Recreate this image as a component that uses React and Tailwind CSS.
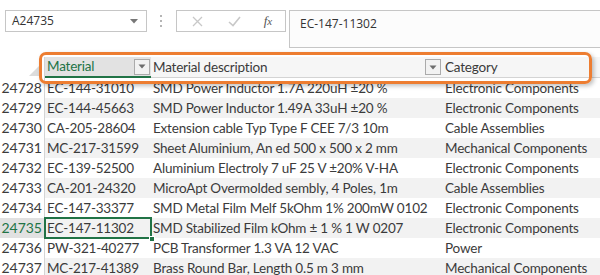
import React from 'react';

const rows = [
  ['24728', 'EC-144-31010', 'SMD Power Inductor 1.7A 220uH ±20 %', 'Electronic Components'],
  ['24729', 'EC-144-45663', 'SMD Power Inductor 1.49A 33uH ±20 %', 'Electronic Components'],
  ['24730', 'CA-205-28604', 'Extension cable Typ Type F CEE 7/3 10m', 'Cable Assemblies'],
  ['24731', 'MC-217-31599', 'Sheet Aluminium, An ed 500 x 500 x 2 mm', 'Mechanical Components'],
  ['24732', 'EC-139-52500', 'Aluminium Electroly 7 uF 25 V ±20% V-HA', 'Electronic Components'],
  ['24733', 'CA-201-24320', 'MicroApt Overmolded sembly, 4 Poles, 1m', 'Cable Assemblies'],
  ['24734', 'EC-147-33377', 'SMD Metal Film Melf 5kOhm 1% 200mW 0102', 'Electronic Components'],
  ['24735', 'EC-147-11302', 'SMD Stabilized Film kOhm ± 1 % 1 W 0207', 'Electronic Components'],
  ['24736', 'PW-321-40277', 'PCB Transformer 1.3 VA 12 VAC', 'Power'],
  ['24737', 'MC-217-41389', 'Brass Round Bar, Length 0.5 m 3 mm', 'Mechanical Components'],
];

const FilterButton = () => (
  <div className="w-[16px] h-[16px] border border-[#ababab] bg-[#f2f2f2] flex items-center justify-center shrink-0">
    <svg width="8" height="5" viewBox="0 0 8 5">
      <path d="M0.5 0.5 L7.5 0.5 L4 4.5 Z" fill="#6d6d6d" />
    </svg>
  </div>
);

const App = () => {
  return (
    <div className="relative w-[600px] h-[275px] overflow-hidden bg-white text-[#3b3b3b]" style={{ fontFamily: 'Lato, "Open Sans", sans-serif' }}>
      {/* formula bar */}
      <div className="h-[57px] flex items-start pt-[10px]" style={{ fontFamily: '"Open Sans", sans-serif' }}>
        <div className="ml-[5px] w-[142px] h-[22px] border border-[#c6c6c6] flex items-center justify-between pl-[6px] pr-[8px] text-[12px] text-[#333]">
          <span>A24735</span>
          <svg width="8" height="5" viewBox="0 0 8 5">
            <path d="M0 0 L8 0 L4 4.5 Z" fill="#777" />
          </svg>
        </div>
        <div className="ml-[12px] w-[4px] h-[22px] flex flex-col items-center justify-center gap-[3px]">
          <div className="w-[2px] h-[2px] bg-[#b5b5b5]" />
          <div className="w-[2px] h-[2px] bg-[#b5b5b5]" />
          <div className="w-[2px] h-[2px] bg-[#b5b5b5]" />
        </div>
        <div className="ml-[13px] w-[110px] h-[22px] border border-[#c6c6c6] flex items-center">
          <div className="w-[40px] flex justify-center">
            <svg width="11" height="11" viewBox="0 0 11 11">
              <path d="M1 1 L10 10 M10 1 L1 10" stroke="#c8c8c8" strokeWidth="1.3" />
            </svg>
          </div>
          <div className="w-[34px] flex justify-center">
            <svg width="13" height="11" viewBox="0 0 13 11">
              <path d="M1 6 L5 9.5 L12 1" stroke="#c8c8c8" strokeWidth="1.6" fill="none" />
            </svg>
          </div>
          <div className="w-[34px] flex justify-center text-[13px] italic text-[#555]" style={{ fontFamily: '"Liberation Serif", serif' }}>
            <span>f</span><span className="text-[11px] mt-[2px]">x</span>
          </div>
        </div>
        <div className="ml-[3px] flex-1 h-[38px] border border-r-0 border-[#c6c6c6] bg-[#fcfcfc] pl-[10px] pt-[4px] text-[12px] text-[#333]">
          EC-147-11302
        </div>
      </div>

      {/* header row */}
      <div className="flex h-[21px] text-[13.5px] tracking-[-0.2px]">
        <div className="w-[45px] shrink-0 border-r border-[#d4d4d4] flex items-end justify-end pr-[3px] pb-[2px]">
          <svg width="12" height="12" viewBox="0 0 12 12">
            <path d="M12 0 L12 12 L0 12 Z" fill="#dcdcdc" />
          </svg>
        </div>
        <div className="w-[106px] shrink-0 bg-[#e2e2e2] border-b-2 border-[#217346] flex items-center justify-between pl-[2px] pr-[1px] text-[#217346]">
          <span>Material</span>
          <FilterButton />
        </div>
        <div className="w-[292px] shrink-0 bg-[#f6f6f6] border-b border-[#d4d4d4] flex items-center justify-between pl-[2px] pr-[2px]">
          <span>Material description</span>
          <FilterButton />
        </div>
        <div className="flex-1 bg-[#f6f6f6] border-b border-[#d4d4d4] flex items-center pl-[2px]">
          <span>Category</span>
        </div>
      </div>

      {/* data rows */}
      {rows.map((r, i) => {
        const active = r[0] === '24735';
        return (
          <div key={r[0]} className="flex h-[20px] leading-[20px]">
            <div className={`w-[45px] shrink-0 border-r border-[#d4d4d4] text-right pr-[2px] text-[14px] ${active ? 'bg-[#e1e1e1] text-[#217346]' : 'bg-white'}`}>
              {r[0]}
            </div>
            <div className={`flex flex-1 text-[13.5px] tracking-[-0.2px] ${i % 2 === 1 ? 'bg-[#f2f2f2]' : 'bg-white'}`}>
              <div className={`relative w-[106px] shrink-0 pl-[2px] ${active ? 'outline-2 outline-[#217346] -outline-offset-1' : ''}`}>
                {r[1]}
                {active && <div className="absolute right-[-4px] bottom-[-4px] w-[6px] h-[6px] bg-[#217346] border border-white" />}
              </div>
              <div className="w-[292px] shrink-0 pl-[2px] whitespace-nowrap overflow-hidden">{r[2]}</div>
              <div className="flex-1 pl-[2px] whitespace-nowrap">{r[3]}</div>
            </div>
          </div>
        );
      })}

      {/* highlight around the header */}
      <div className="absolute left-[39px] top-[52px] w-[553px] h-[32px] border-[3px] border-[#ed7d31] rounded-[7px] shadow-[2px_2px_4px_rgba(0,0,0,0.25)]" />
    </div>
  );
};

export default App;
